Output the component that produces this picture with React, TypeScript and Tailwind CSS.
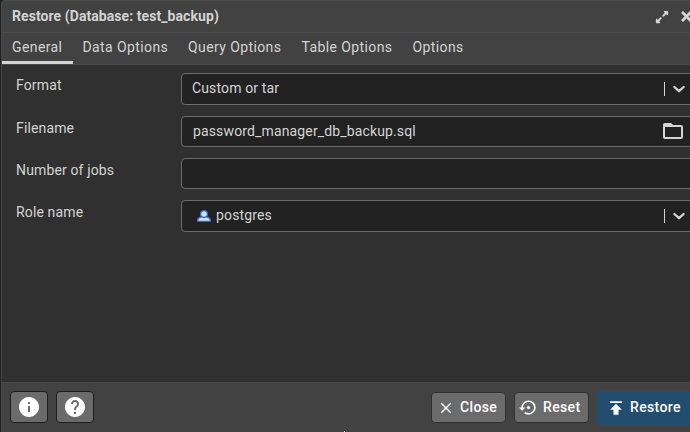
import type { ReactNode } from "react";
import { FaExpandAlt, FaTimes } from "react-icons/fa";
import {
  MdClose,
  MdFolderOpen,
  MdHelp,
  MdInfo,
  MdPublish,
  MdSettingsBackupRestore,
} from "react-icons/md";

const tabs = [
  { label: "General", width: "w-[70.5px]" },
  { label: "Data Options", width: "w-[105.5px]" },
  { label: "Query Options", width: "w-[113.5px]" },
  { label: "Table Options", width: "w-[111px]" },
  { label: "Options", width: "w-[72px]" },
];

function Row({ label, height, children }: { label: string; height: string; children?: ReactNode }) {
  return (
    <div className="flex tracking-[0.14px]">
      <div className="w-[165px] shrink-0 pt-[2px] leading-5">{label}</div>
      <div
        className={`flex w-[520px] shrink-0 items-center rounded-[4px] border border-[#6b6b6b] bg-[#222222] ${height}`}
      >
        {children}
      </div>
    </div>
  );
}

function SelectArrow() {
  return (
    <div className="flex items-center">
      <span className="h-[14px] w-px bg-[#d4d4d4]" />
      <svg className="ml-2 h-[8px] w-[12px]" viewBox="0 0 12 8" fill="none">
        <path d="M1.4 2 6 6.2 10.6 2" stroke="#d4d4d4" strokeWidth="2.3" strokeLinecap="round" strokeLinejoin="round" />
      </svg>
    </div>
  );
}

function RoleIcon() {
  return (
    <svg className="h-[12px] w-[14px]" viewBox="0 0 14 12">
      <path d="M.6 11.4v-.9c0-1.8 1.2-3 3.3-3.6h6.2c2.1.6 3.3 1.8 3.3 3.6v.9z" fill="#c5e2f7" stroke="#3568c0" strokeWidth="1.2" />
      <circle cx="7" cy="4" r="3.4" fill="#c5e2f7" stroke="#3568c0" strokeWidth="1.2" />
    </svg>
  );
}

export default function App() {
  return (
    <div className="flex h-[432px] w-[690px] overflow-hidden bg-[#202020] pl-px font-['Roboto',sans-serif] text-sm text-[#d4d4d4]">
      <div className="flex w-[720px] shrink-0 flex-col overflow-hidden rounded-tl-[4px] border-l border-t border-[#4a4a4a] bg-[#303030]">
        <header className="flex h-8 shrink-0 items-center border-b border-[#4a4a4a] bg-[#424242] pl-[10px]">
          <h1 className="w-[643px] pb-[2px] text-[14px] font-bold leading-5 tracking-[0.07px]">Restore (Database: test_backup)</h1>
          <FaExpandAlt className="size-[14px]" />
          <FaTimes className="ml-[10px] size-[15px]" />
        </header>
        <nav className="flex h-8 shrink-0 border-b border-[#4a4a4a] bg-[#424242] tracking-[0.4px]">
          {tabs.map((tab, i) => (
            <div
              key={tab.label}
              className={`${tab.width} shrink-0 whitespace-nowrap pl-[10px] pt-1 leading-5 ${i === 0 ? "border-b-[3px] border-[#d4d4d4]" : ""}`}
            >
              {tab.label}
            </div>
          ))}
        </nav>
        <main className="flex flex-1 flex-col gap-[11px] pl-[14px] pt-2">
          <Row label="Format" height="h-8">
            <span className="w-[482px] shrink-0 pb-[2px] pl-[10px]">Custom or tar</span>
            <SelectArrow />
          </Row>
          <Row label="Filename" height="h-[31px]">
            <span className="w-[479px] shrink-0 pb-px pl-[11px]">password_manager_db_backup.sql</span>
            <MdFolderOpen className="mb-[2px] size-6" />
          </Row>
          <Row label="Number of jobs" height="h-[31px]" />
          <Row label="Role name" height="h-8">
            <span className="flex w-[482px] shrink-0 items-center gap-[5px] pl-[15px]">
              <RoleIcon />
              <span className="pb-[2px]">postgres</span>
            </span>
            <SelectArrow />
          </Row>
        </main>
        <footer className="flex h-[50px] shrink-0 items-start border-t border-[#4a4a4a] bg-[#424242] pl-2 pt-2 text-white">
          <button className="flex h-8 w-[38px] items-center justify-center rounded-[4px] border border-[#1e1e1e] bg-[#6b6b6b]">
            <MdInfo className="size-6" />
          </button>
          <button className="ml-2 flex h-8 w-[38px] items-center justify-center rounded-[4px] border border-[#1e1e1e] bg-[#6b6b6b]">
            <MdHelp className="size-6" />
          </button>
          <button className="ml-[337px] mt-px flex h-[31px] w-[75px] items-center rounded-[4px] border border-[#303030] bg-[#6b6b6b] pl-[5px] font-medium tracking-[0.35px]">
            <MdClose className="size-[18px]" />
            <span className="ml-[5px] pb-px">Close</span>
          </button>
          <button className="ml-2 mt-px flex h-[31px] w-[75px] items-center rounded-[4px] border border-[#303030] bg-[#6b6b6b] pl-1 font-medium tracking-[0.35px]">
            <MdSettingsBackupRestore className="size-[19px]" />
            <span className="ml-[5px] pb-px">Reset</span>
          </button>
          <button className="ml-2 flex h-[34px] w-[104px] items-center rounded-[4px] bg-[#234d6e] pl-[9px] font-medium tracking-[0.35px]">
            <MdPublish className="size-5" />
            <span className="ml-1 pb-[2px]">Restore</span>
          </button>
        </footer>
      </div>
      <span className="absolute left-[344px] top-[431px] size-px bg-white" />
    </div>
  );
}
